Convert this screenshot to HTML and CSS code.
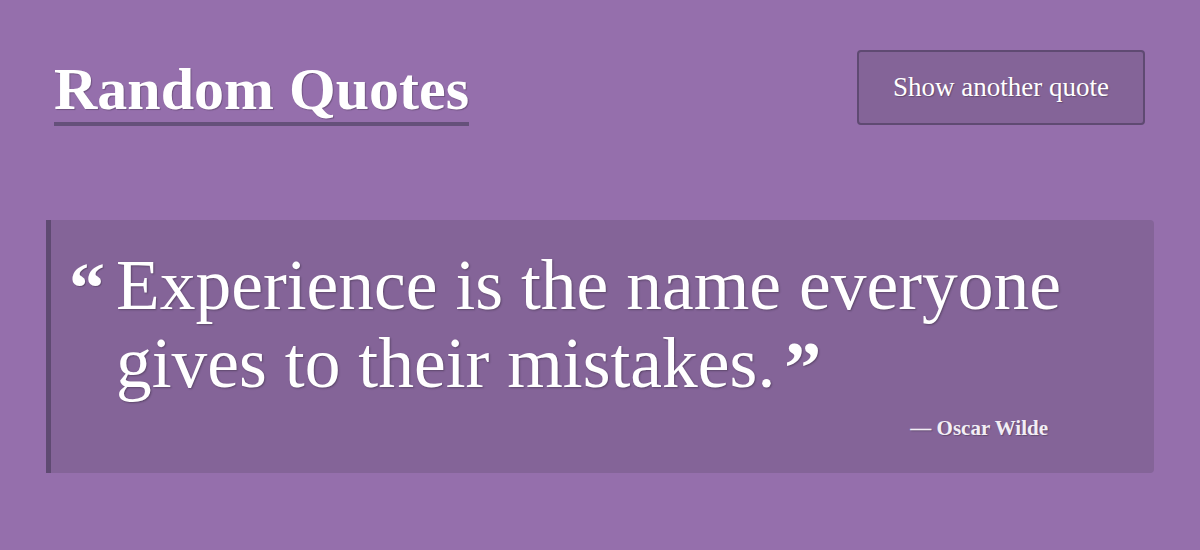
FILE: index.html
```html
<!DOCTYPE html>
<html>
<head>
<meta charset="utf-8">
<link rel="stylesheet" href="styles.css">
</head>
<body>
<div class="page">
  <header class="top">
    <h1 class="title">Random Quotes</h1>
    <button class="btn">Show another quote</button>
  </header>
  <section class="quote-box">
    <div class="quote-row">
      <span class="mark-open">“</span>
      <p class="quote-text">Experience is the name everyone gives to their mistakes.<span class="mark-close">”</span></p>
    </div>
    <div class="author">— Oscar Wilde</div>
  </section>
</div>
</body>
</html>
```
FILE: styles.css
```css
html, body {
  margin: 0;
  padding: 0;
}
body {
  background: #956fac;
  font-family: "Liberation Serif", "Times New Roman", serif;
  color: #fff;
  width: 1200px;
  height: 550px;
  overflow: hidden;
}
.page {
  padding: 50px 46px 0 46px;
}
.top {
  display: flex;
  justify-content: space-between;
  align-items: flex-start;
  padding: 0 9px 0 8px;
}
.title {
  margin: 7px 0 0 0;
  font-size: 60px;
  font-weight: bold;
  line-height: 65px;
  border-bottom: 4px solid #65507a;
  text-shadow: 1px 1px 1px rgba(0,0,0,0.25);
}
.btn {
  width: 288px;
  height: 75px;
  background: #846498;
  border: 2px solid #5f4a72;
  border-radius: 4px;
  color: #fff;
  font-family: inherit;
  font-size: 27px;
  text-shadow: 1px 1px 1px rgba(0,0,0,0.25);
  padding: 0;
}
.quote-box {
  margin-top: 94px;
  height: 253px;
  box-sizing: border-box;
  background: #846498;
  border-left: 5px solid #5f4a72;
  border-radius: 0 4px 4px 0;
  padding: 26px 40px 0 18px;
}
.quote-row {
  display: flex;
}
.mark-open {
  width: 47px;
  flex: none;
  font-size: 72px;
  font-weight: bold;
  line-height: 78px;
  margin-top: 3px;
  text-shadow: 1px 1px 1px rgba(0,0,0,0.25);
}
.quote-text {
  margin: 0;
  font-size: 71.5px;
  line-height: 78px;
  text-shadow: 1px 1px 2px rgba(0,0,0,0.3);
}
.mark-close {
  font-size: 74px;
  font-weight: bold;
  line-height: 0;
  margin-left: 9px;
  vertical-align: -6px;
}
.author {
  text-align: right;
  font-size: 21px;
  font-weight: bold;
  line-height: 24px;
  color: #f2eef5;
  margin-top: 14px;
  padding-right: 66px;
  text-shadow: 1px 1px 1px rgba(0,0,0,0.25);
}
```
